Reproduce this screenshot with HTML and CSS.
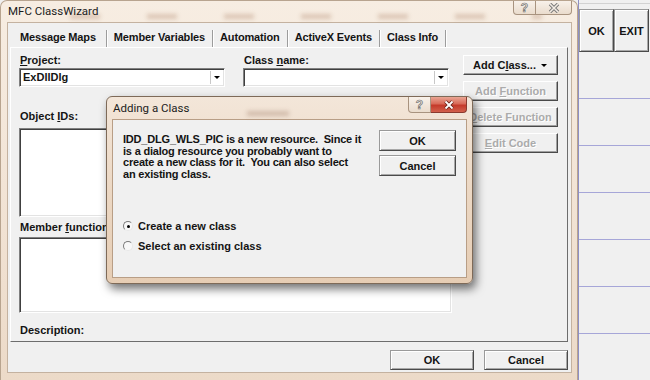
FILE: index.html
```html
<!DOCTYPE html>
<html lang="en">
  <head>
    <meta charset="UTF-8" />
    <meta name="viewport" content="width=device-width, initial-scale=1.0" />
    <title>MFC ClassWizard</title>
    <link rel="stylesheet" href="styles.css">
  </head>
  <body>
    <div class="desktop">
      <div class="wizard">
        <div class="titlebar">
          <div class="smudges"></div>
          <span class="title">MFC ClassWizard</span>
          <div class="capbuttons">
            <span class="cap help">?</span>
            <span class="cap close">
              <svg width="12" height="10" viewBox="0 0 12 10">
                <path d="M2 1 L10 9 M10 1 L2 9" stroke="#777" stroke-width="3.4" fill="none" />
                <path d="M2 1 L10 9 M10 1 L2 9" stroke="#f3ebe3" stroke-width="1.6" fill="none" />
              </svg>
            </span>
          </div>
        </div>
        <div class="client">
          <div class="tabs">
            <span class="tab selected">Message Maps</span>
            <span class="tab">Member Variables</span>
            <span class="tab">Automation</span>
            <span class="tab">ActiveX Events</span>
            <span class="tab">Class Info</span>
          </div>
          <div class="panel">
            <div class="fields">
              <div class="row">
                <div class="col">
                  <label><u>P</u>roject:</label>
                  <div class="combo"><span class="value">ExDllDlg</span><span class="drop"></span></div>
                </div>
                <div class="col">
                  <label>Class <u>n</u>ame:</label>
                  <div class="combo"><span class="value"></span><span class="drop"></span></div>
                </div>
              </div>
              <div class="row second">
                <div class="col">
                  <label>Object <u>I</u>Ds:</label>
                  <div class="list ids"></div>
                </div>
                <div class="col">
                  <label>Messa<u>g</u>es:</label>
                  <div class="list ids"></div>
                </div>
              </div>
              <label class="gap-member">Member <u>f</u>unctions:</label>
              <div class="list members"></div>
              <label class="gap-desc">Description:</label>
            </div>
            <div class="actions">
              <button class="btn action addclass"><span>Add C<u>l</u>ass...</span><span class="arrow"></span></button>
              <button class="btn action" disabled>Add <u>F</u>unction</button>
              <button class="btn action" disabled><u>D</u>elete Function</button>
              <button class="btn action" disabled><u>E</u>dit Code</button>
            </div>
          </div>
          <div class="footer">
            <button class="btn push">OK</button>
            <button class="btn push">Cancel</button>
          </div>
        </div>
      </div>
      <div class="side">
        <div class="toolbar">
          <button class="btn push sidebtn">OK</button>
          <button class="btn push sidebtn">EXIT</button>
        </div>
        <div class="gridrow"></div>
        <div class="gridrow"></div>
        <div class="gridrow"></div>
        <div class="gridrow"></div>
        <div class="gridrow"></div>
        <div class="gridrow"></div>
        <div class="gridrow"></div>
      </div>
    </div>

    <div class="dialog">
      <div class="dlgtitle">
        <div class="ghost"></div>
        <span class="title">Adding a Class</span>
        <div class="capbuttons">
          <span class="cap help">?</span>
          <span class="cap close red">
            <svg width="12" height="10" viewBox="0 0 12 10">
              <path d="M2.5 1.5 L9.5 8.5 M9.5 1.5 L2.5 8.5" stroke="#6a241a" stroke-width="3.6" fill="none" />
              <path d="M2.5 1.5 L9.5 8.5 M9.5 1.5 L2.5 8.5" stroke="#fff" stroke-width="1.8" fill="none" />
            </svg>
          </span>
        </div>
      </div>
      <div class="dlgclient">
        <div class="dlgtext">
          <p>IDD_DLG_WLS_PIC is a new resource.&nbsp; Since it<br>is a dialog resource you probably want to<br>create a new class for it.&nbsp; You can also select<br>an existing class.</p>
          <div class="option"><span class="radio on"></span>Create a new class</div>
          <div class="option"><span class="radio"></span>Select an existing class</div>
        </div>
        <div class="dlgbuttons">
          <button class="btn push dlgbtn">OK</button>
          <button class="btn push dlgbtn">Cancel</button>
        </div>
      </div>
    </div>
  </body>
</html>
```

FILE: styles.css
```css
body {
  margin: 0;
  width: 650px;
  height: 380px;
  overflow: hidden;
  background-color: #f0f0f0;
  font-family: "Liberation Sans", Arial, sans-serif;
  font-size: 11px;
  font-weight: bold;
  color: #141414;
  position: relative;
}
.desktop {
  display: flex;
  height: 380px;
}

/* main window */
.wizard {
  width: 578px;
  flex-shrink: 0;
  box-sizing: border-box;
  border: 1px solid #b8a48f;
  border-bottom: none;
  border-radius: 7px 7px 0 0;
  padding: 0 5px 6px 6px;
  background: linear-gradient(#f7ede2, #f1e2d3 60%, #ecdac8);
}
.titlebar {
  height: 21px;
  display: flex;
  align-items: flex-start;
  position: relative;
}
.smudges {
  position: absolute;
  left: 55px;
  right: 30px;
  top: 13px;
  height: 5px;
  background: repeating-linear-gradient(90deg, transparent 0 8px, rgba(160, 110, 80, 0.3) 8px 38px, transparent 38px 77px);
  filter: blur(2px);
}
.title {
  font-family: Roboto, "Liberation Sans", sans-serif;
  font-weight: normal;
  font-size: 11.5px;
  line-height: 20px;
  color: #1c1c1c;
  padding-left: 1px;
  position: relative;
}
.capbuttons {
  margin-left: auto;
  display: flex;
  position: relative;
}
.cap {
  height: 13px;
  display: flex;
  align-items: center;
  justify-content: center;
  border: 1px solid #a8937f;
  border-top: none;
  background: linear-gradient(#f8f1ea, #eadccd);
}
.cap.help {
  width: 20px;
  border-radius: 0 0 0 4px;
  font-size: 12px;
  color: #f6efe8;
  -webkit-text-stroke: 0.7px #707070;
}
.cap.close {
  width: 35px;
  border-left: none;
  border-radius: 0 0 4px 0;
}
.client {
  height: 351px;
  background-color: #f0f0f0;
  box-sizing: border-box;
  border: 1px solid #c4b2a0;
}

/* tabs */
.tabs {
  height: 24px;
  display: flex;
  align-items: flex-end;
}
.tab {
  height: 17px;
  line-height: 15px;
  padding: 0 7px;
  letter-spacing: -0.15px;
  border-right: 1px solid #9c9c9c;
  box-shadow: 1px 0 0 #fff;
}
.tab.selected {
  padding: 0 10px 0 12px;
}
.panel {
  height: 295px;
  margin: 0 3px 0 2px;
  box-sizing: border-box;
  border: 1px solid;
  border-color: #fff #6d6d6d #6d6d6d #fff;
  display: flex;
  padding: 6px 0 0 8px;
}
.fields {
  width: 433px;
}
.row {
  display: flex;
  gap: 18px;
}
.row.second {
  margin-top: 23px;
}
.col {
  width: 206px;
}
label {
  display: block;
  height: 13px;
  line-height: 13px;
  padding-left: 1px;
}
.combo {
  height: 19px;
  margin-top: 1px;
  box-sizing: border-box;
  border: 1px solid;
  border-color: #808080 #fff #fff #808080;
  box-shadow: inset 1px 1px #404040, inset -1px -1px #e3e3e3;
  background-color: #fff;
  display: flex;
}
.value {
  flex: 1;
  line-height: 17px;
  padding-left: 3px;
}
.drop {
  width: 11px;
  margin: 2px 2px 2px 0;
  border-left: 1px solid #c8c8c8;
  display: flex;
  align-items: center;
  justify-content: center;
}
.drop::after {
  content: "";
  border-left: 3px solid transparent;
  border-right: 3px solid transparent;
  border-top: 3px solid #000;
}
.list {
  box-sizing: border-box;
  border: 1px solid;
  border-color: #808080 #fff #fff #808080;
  box-shadow: inset 1px 1px #404040, inset -1px -1px #e3e3e3;
  background-color: #fff;
}
.list.ids {
  margin-top: 5px;
  height: 89px;
}
.gap-member {
  margin-top: 4px;
}
.list.members {
  margin-top: 3px;
  height: 76px;
}
.gap-desc {
  margin-top: 11px;
}

/* buttons */
.btn {
  box-sizing: border-box;
  padding: 0;
  background-color: #f0f0f0;
  font-family: "Liberation Sans", Arial, sans-serif;
  font-size: 11px;
  font-weight: bold;
  color: #141414;
  border: 1px solid;
}
.btn u {
  text-underline-offset: 1px;
}
.action {
  height: 20px;
  border-color: #fff #4a4a4a #4a4a4a #fff;
  box-shadow: inset -1px -1px #a0a0a0;
}
.action:disabled {
  color: #ababab;
  text-shadow: 1px 1px 0 #fff;
}
.actions {
  width: 95px;
  margin: 1px 0 0 11px;
  display: flex;
  flex-direction: column;
  gap: 6px;
}
.addclass {
  display: flex;
  align-items: center;
  justify-content: space-between;
  padding: 0 10px 0 9px;
}
.arrow {
  border-left: 3px solid transparent;
  border-right: 3px solid transparent;
  border-top: 3px solid #000;
}
.push {
  border-color: #9a9a9a #4a4a4a #4a4a4a #9a9a9a;
  box-shadow: inset 1px 1px #fff, inset -1px -1px #a8a8a8;
}
.footer {
  display: flex;
  justify-content: flex-end;
  gap: 10px;
  padding: 8px 3px 0 0;
}
.footer .btn {
  width: 84px;
  height: 20px;
}

/* right side */
.side {
  flex: 1;
  border-left: 1px solid #8f8fc4;
  padding-top: 3px;
}
.toolbar {
  display: flex;
  border-top: 1px solid #d2d2d2;
  padding-top: 5px;
}
.sidebtn {
  width: 35px;
  height: 43px;
}
.gridrow {
  height: 46px;
  border-bottom: 1px solid #a6a6d8;
}

/* adding a class dialog */
.dialog {
  position: absolute;
  left: 106px;
  top: 96px;
  width: 367px;
  height: 188px;
  box-sizing: border-box;
  border: 1px solid #7e6a58;
  border-radius: 6px;
  padding: 0 5px 6px 5px;
  background: linear-gradient(#f3e6d9, #ecd8c4 50%, #e6cdb4);
  box-shadow: 3px 5px 10px rgba(0, 0, 0, 0.55);
}
.dlgtitle {
  height: 22px;
  display: flex;
  align-items: flex-start;
  position: relative;
}
.dlgtitle .title {
  line-height: 22px;
}
.ghost {
  position: absolute;
  left: 135px;
  top: 14px;
  width: 42px;
  height: 5px;
  background-color: rgba(140, 100, 75, 0.3);
  filter: blur(2px);
}
.dlgtitle .cap {
  height: 15px;
}
.cap.help {
  width: 21px;
}
.cap.red {
  border-color: #8a3a2e;
  background: linear-gradient(#e9a593, #d86a58 45%, #c43a2a 55%, #d2604c);
}
.dlgclient {
  height: 159px;
  box-sizing: border-box;
  border: 1px solid #b89e86;
  background-color: #f0f0f0;
  display: flex;
}
.dlgtext {
  flex: 1;
  padding: 14px 0 0 10px;
}
.dlgtext p {
  margin: 0;
  line-height: 11.5px;
  letter-spacing: -0.2px;
}
.option {
  display: flex;
  align-items: center;
  height: 20px;
}
.option:first-of-type {
  margin-top: 36px;
}
.radio {
  width: 10px;
  height: 10px;
  box-sizing: border-box;
  border-radius: 50%;
  border: 1px solid;
  border-color: #7a7a7a #e8e8e8 #e8e8e8 #7a7a7a;
  background-color: #f8f8f8;
  margin: 0 5px 0 0;
  display: flex;
  align-items: center;
  justify-content: center;
}
.radio.on::after {
  content: "";
  width: 3px;
  height: 3px;
  border-radius: 50%;
  background-color: #000;
}
.dlgbuttons {
  display: flex;
  flex-direction: column;
  gap: 4px;
  padding: 10px 10px 0 0;
}
.dlgbtn {
  width: 77px;
  height: 21px;
}
```
